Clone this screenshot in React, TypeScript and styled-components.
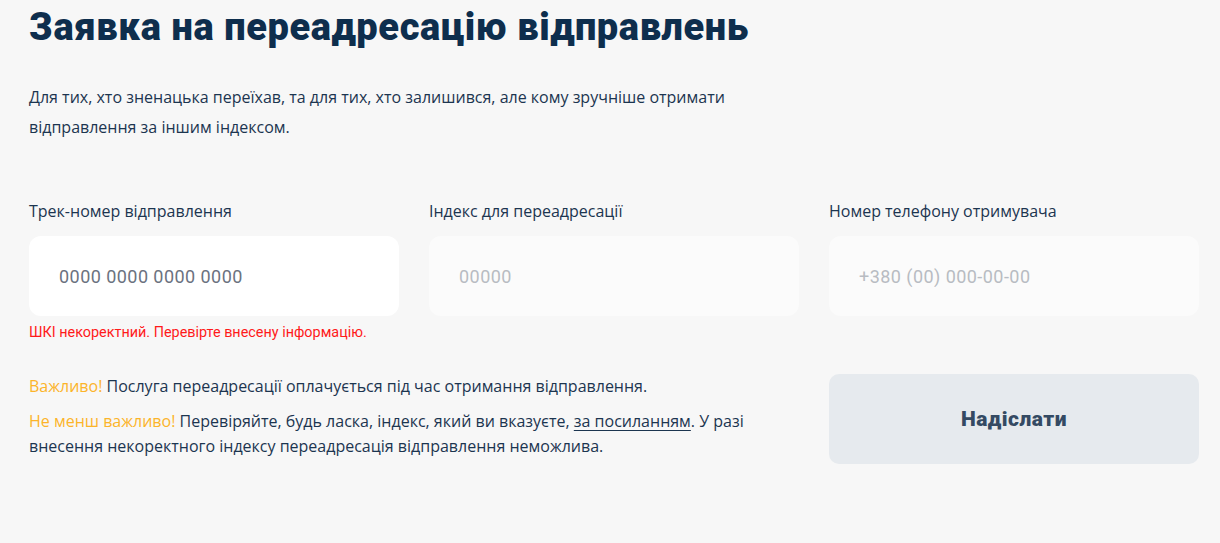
import styled, { createGlobalStyle } from 'styled-components';

const GlobalStyle = createGlobalStyle`
  html, body {
    margin: 0;
    padding: 0;
    background: #f7f7f7;
  }
  body {
    font-family: 'Open Sans', 'Noto Sans', sans-serif;
    color: #1b2b3d;
  }
  * {
    box-sizing: border-box;
  }
`;

const Page = styled.main`
  width: 1220px;
  height: 543px;
  padding: 6px 21px 0 29px;
  background: #f7f7f7;
  overflow: hidden;
`;

const Title = styled.h1`
  margin: 0;
  font-family: 'Roboto', 'Liberation Sans', sans-serif;
  font-weight: 900;
  font-size: 38px;
  line-height: 42px;
  letter-spacing: 0.6px;
  color: #0e2e4d;
`;

const Lead = styled.p`
  margin: 34px 0 0;
  max-width: 730px;
  font-size: 16px;
  line-height: 30px;
  color: #1c3550;
`;

const Fields = styled.div`
  display: grid;
  grid-template-columns: repeat(3, 370px);
  column-gap: 30px;
  margin-top: 58px;
`;

const Field = styled.label`
  display: flex;
  flex-direction: column;
`;

const Label = styled.span`
  font-size: 16px;
  line-height: 22px;
  color: #1c3550;
`;

const Input = styled.input<{ $active?: boolean }>`
  margin-top: 14px;
  height: 80px;
  border: none;
  border-radius: 12px;
  padding: 0 30px;
  background: ${p => (p.$active ? '#ffffff' : '#fbfbfb')};
  font-family: 'Roboto', 'Liberation Sans', sans-serif;
  font-size: 18px;
  letter-spacing: 0.45px;
  outline: none;

  &::placeholder {
    color: ${p => (p.$active ? '#6b7280' : '#b8bcc2')};
  }
`;

const Error = styled.span`
  margin-top: 8px;
  font-family: 'Roboto', 'Liberation Sans', sans-serif;
  font-size: 14.4px;
  line-height: 18px;
  color: #ff1a1a;
`;

const Bottom = styled.div`
  display: grid;
  grid-template-columns: 770px 370px;
  column-gap: 30px;
  margin-top: 32px;
`;

const Notes = styled.div`
  display: flex;
  flex-direction: column;
  gap: 10px;
  max-width: 725px;
`;

const Note = styled.p`
  margin: 0;
  font-size: 16px;
  line-height: 25px;
  color: #1c3550;
`;

const Accent = styled.span`
  color: #fcb42a;
`;

const Link = styled.a`
  color: inherit;
  text-decoration: underline;
  text-underline-offset: 3px;
`;

const Submit = styled.button`
  height: 90px;
  border: none;
  border-radius: 10px;
  background: #e6eaee;
  font-family: 'Roboto', 'Liberation Sans', sans-serif;
  font-weight: 900;
  font-size: 21px;
  letter-spacing: 0.5px;
  color: #344a63;
  cursor: pointer;
`;

export default function App(): JSX.Element {
  return (
    <>
      <GlobalStyle />
      <Page>
        <Title>Заявка на переадресацію відправлень</Title>
        <Lead>
          Для тих, хто зненацька переїхав, та для тих, хто залишився, але кому зручніше отримати
          відправлення за іншим індексом.
        </Lead>

        <Fields>
          <Field>
            <Label>Трек-номер відправлення</Label>
            <Input $active placeholder="0000 0000 0000 0000" />
            <Error>ШКІ некоректний. Перевірте внесену інформацію.</Error>
          </Field>
          <Field>
            <Label>Індекс для переадресації</Label>
            <Input placeholder="00000" />
          </Field>
          <Field>
            <Label>Номер телефону отримувача</Label>
            <Input placeholder="+380 (00) 000-00-00" />
          </Field>
        </Fields>

        <Bottom>
          <Notes>
            <Note>
              <Accent>Важливо!</Accent> Послуга переадресації оплачується під час отримання відправлення.
            </Note>
            <Note>
              <Accent>Не менш важливо!</Accent> Перевіряйте, будь ласка, індекс, який ви вказуєте,{' '}
              <Link href="#">за посиланням</Link>. У разі внесення некоректного індексу переадресація
              відправлення неможлива.
            </Note>
          </Notes>
          <Submit type="button">Надіслати</Submit>
        </Bottom>
      </Page>
    </>
  );
}
